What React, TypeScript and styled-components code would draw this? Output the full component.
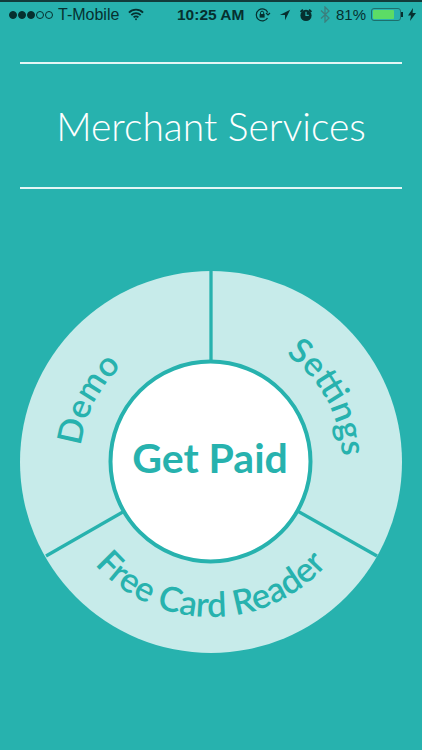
import React from "react";
import styled, { createGlobalStyle } from "styled-components";

const teal = "#27b2ae";
const pale = "#c7ebea";
const ink = "#06302f";

const GlobalStyle = createGlobalStyle`
  html, body { margin: 0; padding: 0; background: ${teal}; }
`;

const Screen = styled.div`
  width: 422px;
  height: 750px;
  background: ${teal};
  overflow: hidden;
  display: flex;
  flex-direction: column;
  border-top: 2px solid #123c3b;
  box-sizing: border-box;
`;

const StatusBar = styled.div`
  height: 25px;
  padding: 0 6px 0 9px;
  display: grid;
  grid-template-columns: 168px auto 1fr;
  align-items: center;
  font-family: "Liberation Sans", Arial, sans-serif;
  font-size: 15px;
  color: ${ink};
`;

const StatusGroup = styled.div<{ $gap: number; $end?: boolean }>`
  display: flex;
  align-items: center;
  gap: ${(p) => p.$gap}px;
  justify-content: ${(p) => (p.$end ? "flex-end" : "flex-start")};
`;

const Dot = styled.span<{ $on: boolean }>`
  width: 8px;
  height: 8px;
  border-radius: 50%;
  box-sizing: border-box;
  border: 1px solid ${ink};
  background: ${(p) => (p.$on ? ink : "transparent")};
  margin-right: 1px;
`;

const Carrier = styled.span`
  font-size: 16px;
`;

const Time = styled.span`
  font-size: 15.5px;
  font-weight: 700;
`;

const Icon = styled.svg<{ $left?: number }>`
  display: block;
  margin-left: ${(p) => p.$left ?? 0}px;
`;

const Battery = styled.div`
  position: relative;
  width: 30px;
  height: 13px;
  border: 1px solid #1d6f6c;
  border-radius: 3px;
  padding: 1px;
  box-sizing: border-box;
  margin-left: -1px;

  &::after {
    content: "";
    position: absolute;
    right: -3px;
    top: 3px;
    width: 2px;
    height: 5px;
    background: ${ink};
  }
`;

const BatteryFill = styled.div`
  height: 100%;
  border-radius: 1px;
  background: #5cdc66;
`;

const Header = styled.header`
  margin: 35px 20px 0;
  height: 123px;
  border-top: 2px solid #e4f6f5;
  border-bottom: 2px solid #e4f6f5;
  display: flex;
  align-items: center;
  justify-content: center;
`;

const Title = styled.h1`
  margin: 0;
  color: #fff;
  font-family: "Lato", "Noto Sans", sans-serif;
  font-weight: 300;
  font-size: 39px;
`;

const WheelWrap = styled.div`
  margin: 82px auto 0;
  width: 382px;
  height: 382px;
`;

const WheelText = styled.text<{ $bold?: boolean }>`
  font-family: "Lato", sans-serif;
  font-weight: ${(p) => (p.$bold ? 700 : 600)};
  fill: ${teal};
`;

function Wheel() {
  const c = 191;
  return (
    <svg width="382" height="382" viewBox="0 0 382 382">
      <defs>
        <path id="demo" d="M 60 191 A 131 131 0 0 1 191 60" />
        <path id="settings" d="M 191 60 A 131 131 0 0 1 322 191" />
        <path id="reader" d="M 36 191 A 155 155 0 0 0 346 191" />
      </defs>
      <circle cx={c} cy={c} r={c} fill={pale} />
      <g stroke={teal} strokeWidth="3.3">
        <line x1={c} y1="0" x2={c} y2="95" />
        <line x1="26" y1="285" x2="108" y2="238" />
        <line x1="357" y1="285" x2="274" y2="238" />
      </g>
      <circle cx="190.5" cy="190.5" r="100" fill="#fff" stroke={teal} strokeWidth="4" />
      <WheelText fontSize="34">
        <textPath href="#demo" startOffset="30%" textAnchor="middle">Demo</textPath>
      </WheelText>
      <WheelText fontSize="34">
        <textPath href="#settings" startOffset="68%" textAnchor="middle">Settings</textPath>
      </WheelText>
      <WheelText fontSize="34.5">
        <textPath href="#reader" startOffset="50%" textAnchor="middle">Free Card Reader</textPath>
      </WheelText>
      <WheelText $bold x="190" y="202" fontSize="41" textAnchor="middle">Get Paid</WheelText>
    </svg>
  );
}

export default function App() {
  return (
    <Screen>
      <GlobalStyle />
      <StatusBar>
        <StatusGroup $gap={4}>
          <StatusGroup $gap={0}>
            {[true, true, true, false, false].map((on, i) => (
              <Dot key={i} $on={on} />
            ))}
          </StatusGroup>
          <Carrier>T-Mobile</Carrier>
          <Icon $left={5} width="16" height="13" viewBox="0 0 17 13" fill="none" stroke={ink} strokeWidth="2">
            <path d="M1 4.500a10.500 10.500 0 0 1 15 0M3.500 7.200a7 7 0 0 1 10 0M6 9.600a3.400 3.400 0 0 1 5 0" />
            <circle cx="8.500" cy="11.500" r="1" fill={ink} stroke="none" />
          </Icon>
        </StatusGroup>
        <Time>10:25 AM</Time>
        <StatusGroup $gap={6} $end>
          <Icon width="16" height="14" viewBox="0 0 16 14" fill="none" stroke={ink} strokeWidth="1.2">
            <path d="M12.500 10A6 6 0 1 1 12.800 4.500" />
            <path d="M15 5l-2 2-2-2" />
            <rect x="4.600" y="6" width="5" height="3.600" fill={ink} stroke="none" />
            <path d="M5.500 6V4.800a1.600 1.600 0 0 1 3.200 0V6" strokeWidth="1" />
          </Icon>
          <Icon $left={2} width="12" height="12" viewBox="0 0 14 14" fill={ink}>
            <path d="M13 1 7 13V7H1z" />
          </Icon>
          <Icon $left={2} width="14" height="14" viewBox="0 0 15 15" fill={ink}>
            <circle cx="7.500" cy="8" r="6" />
            <path d="M1 3.500 3.500 1l1.400 1.300-2.600 2.500zM14 3.500 11.500 1l-1.400 1.300 2.600 2.500z" />
            <path d="M7.500 4v4h3" stroke={teal} strokeWidth="1.300" fill="none" />
          </Icon>
          <Icon $left={1} width="10" height="17" viewBox="0 0 10 17" fill="none" stroke="#3c7f7d" strokeWidth="1.300">
            <path d="M1 4.500 9 12l-4 4V1l4 4-8 7.500" />
          </Icon>
          <span>81%</span>
          <Battery><BatteryFill style={{ width: "81%" }} /></Battery>
          <Icon $left={1} width="8" height="13" viewBox="0 0 8 13" fill={ink}>
            <path d="M5 0 0 7.500h3L2 13l6-8H4.600z" />
          </Icon>
        </StatusGroup>
      </StatusBar>
      <Header>
        <Title>Merchant Services</Title>
      </Header>
      <WheelWrap>
        <Wheel />
      </WheelWrap>
    </Screen>
  );
}
